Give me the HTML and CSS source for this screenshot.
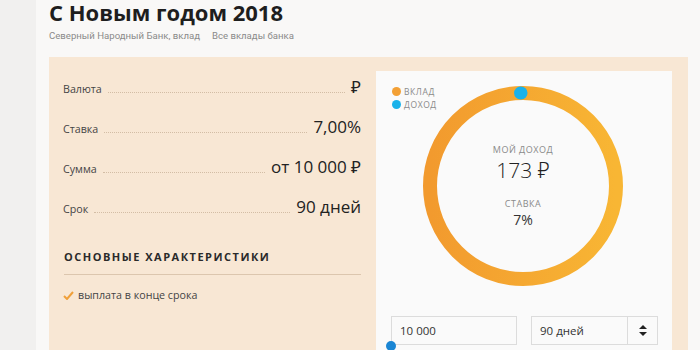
FILE: index.html
```html
<!DOCTYPE html>
<html lang="ru">
<head>
<meta charset="utf-8">
<link rel="stylesheet" href="styles.css">
</head>
<body>
<div class="page">
  <aside class="strip"></aside>
  <main class="main">
    <h1 class="title">С Новым годом 2018</h1>
    <div class="sub"><span>Северный Народный Банк, вклад</span><span>Все вклады банка</span></div>
    <section class="panel">
      <div class="info">
        <div class="row"><span class="lbl">Валюта</span><span class="dots"></span><span class="val">₽</span></div>
        <div class="row"><span class="lbl">Ставка</span><span class="dots"></span><span class="val">7,00%</span></div>
        <div class="row"><span class="lbl">Сумма</span><span class="dots"></span><span class="val">от 10 000 ₽</span></div>
        <div class="row"><span class="lbl">Срок</span><span class="dots"></span><span class="val">90 дней</span></div>
        <h2 class="head">ОСНОВНЫЕ ХАРАКТЕРИСТИКИ</h2>
        <div class="feat"><svg class="check" width="11" height="9" viewBox="0 0 11 9"><polyline points="1,5 4,8 10,1" fill="none" stroke="#f0a03a" stroke-width="2"/></svg>выплата в конце срока</div>
      </div>
      <div class="card">
        <div class="legend">
          <div class="leg"><i class="dot orange"></i>ВКЛАД</div>
          <div class="leg"><i class="dot blue"></i>ДОХОД</div>
        </div>
        <div class="donut">
          <svg width="200" height="200" viewBox="0 0 200 200">
            <defs>
              <linearGradient id="g" x1="0" y1="0" x2="1" y2="0">
                <stop offset="0" stop-color="#f29a2e"/>
                <stop offset="1" stop-color="#f8b634"/>
              </linearGradient>
            </defs>
            <circle cx="100" cy="100" r="93" fill="none" stroke="url(#g)" stroke-width="14"/>
            <circle cx="100" cy="100" r="93" fill="none" stroke="#1ab2ea" stroke-width="13" stroke-linecap="round" stroke-dasharray="0.5 600" transform="rotate(-91.5 100 100)"/>
          </svg>
          <div class="center">
            <div class="cap">МОЙ ДОХОД</div>
            <div class="big">173 ₽</div>
            <div class="cap cap2">СТАВКА</div>
            <div class="mid">7%</div>
          </div>
        </div>
        <div class="inputs">
          <div class="field">10 000</div>
          <div class="field select"><span>90 дней</span><span class="arrows"><svg width="8" height="11" viewBox="0 0 8 11"><path d="M4 0 L8 4 L0 4 Z M4 11 L8 7 L0 7 Z" fill="#222"/></svg></span></div>
        </div>
        <div class="handle"></div>
      </div>
    </section>
  </main>
</div>
</body>
</html>
```
FILE: styles.css
```css
html, body { margin: 0; padding: 0; }
body {
  background: #f9f8f7;
  font-family: "Open Sans", "Noto Sans", sans-serif;
  color: #333;
  width: 700px;
  height: 350px;
  overflow: hidden;
}
.page { display: flex; height: 350px; }
.strip { width: 36px; flex: none; background: #f1f0ef; }
.main { flex: 1; padding-left: 13px; padding-right: 12px; }
.title {
  margin: 0;
  padding-top: 2px;
  font-size: 22px;
  font-weight: 700;
  line-height: 20px;
  color: #1e1e1e;
}
.sub {
  margin-top: 7px;
  font-family: Roboto, "Open Sans", sans-serif;
  font-size: 9.6px;
  line-height: 14px;
  color: #8a8a8a;
  display: flex;
  gap: 12px;
}
.panel {
  margin-top: 14px;
  background: #f8e7d4;
  display: flex;
  padding: 14px 16px 0 14px;
  height: 300px;
  gap: 15px;
}
.info { width: 298px; flex: none; padding-top: 4px; }
.row {
  display: flex;
  align-items: baseline;
  height: 40px;
}
.lbl { font-size: 10.7px; color: #444; }
.dots {
  flex: 1;
  border-bottom: 1px dotted #d3bda5;
  margin: 0 6px;
}
.val { font-size: 17px; color: #222; }
.head {
  margin: 14px 0 0 1px;
  font-size: 11px;
  font-weight: 700;
  letter-spacing: 1.5px;
  color: #2a2a2a;
  padding-bottom: 9px;
  border-bottom: 1px solid #dcc6ae;
  line-height: 16px;
}
.feat {
  margin-top: 13px;
  font-size: 10.7px;
  color: #444;
  display: flex;
  align-items: center;
  gap: 4px;
}
.check { flex: none; }
.card {
  position: relative;
  flex: 1;
  background: #fafafa;
  padding: 15px 14px 0 15px;
}
.legend { position: absolute; left: 16px; top: 14px; }
.leg {
  display: flex;
  align-items: center;
  gap: 3px;
  font-size: 8.5px;
  letter-spacing: 0.6px;
  color: #8a8a8a;
  line-height: 13px;
}
.dot { width: 9px; height: 9px; border-radius: 50%; display: inline-block; }
.orange { background: #f3a035; }
.blue { background: #1ab2ea; }
.donut {
  position: relative;
  width: 200px;
  height: 200px;
  margin-left: 32px;
}
.donut svg { display: block; }
.center {
  position: absolute;
  inset: 0;
  display: flex;
  flex-direction: column;
  align-items: center;
  padding-top: 57px;
}
.cap { font-size: 9px; letter-spacing: 0.5px; color: #8a8a8a; line-height: 13px; }
.cap2 { margin-top: 12px; }
.big { font-size: 21px; font-weight: 300; color: #222; line-height: 29px; }
.mid { font-size: 14px; color: #333; line-height: 19px; }
.inputs { display: flex; gap: 14px; margin-top: 30px; }
.field {
  width: 126px;
  height: 29px;
  box-sizing: border-box;
  border: 1px solid #dcdcdc;
  background: #fafafa;
  font-size: 11.5px;
  color: #333;
  display: flex;
  align-items: center;
  padding-left: 8px;
}
.select { width: 127px; justify-content: space-between; padding-right: 0; }
.arrows {
  width: 29px;
  height: 100%;
  border-left: 1px solid #dcdcdc;
  display: flex;
  align-items: center;
  justify-content: center;
}
.arrows svg { display: block; }
.handle {
  position: absolute;
  left: 10px;
  top: 270px;
  width: 10px;
  height: 10px;
  border-radius: 50%;
  background: #1b86d4;
}
```
